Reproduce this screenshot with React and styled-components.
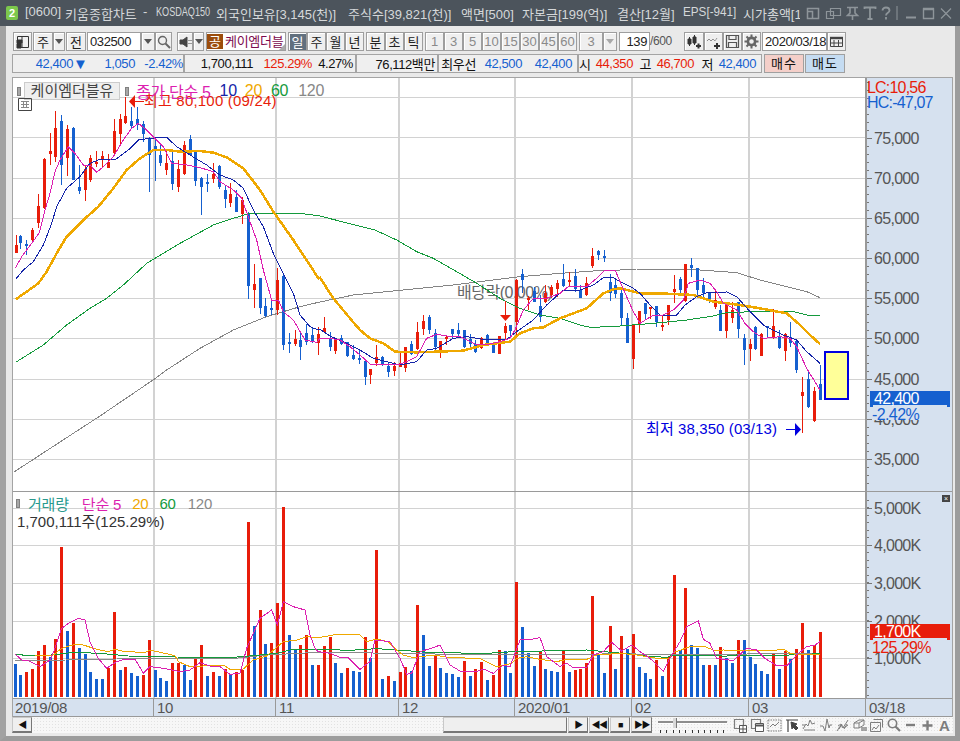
import React from "react";
import styled, { createGlobalStyle } from "styled-components";

const RED = "#e81d0a";
const BLUE = "#1560cf";
const AXIS_BG = "#d6e1ef";
const FONT = `"Liberation Sans", "Noto Sans CJK KR", sans-serif`;

// chart data was read off in blocks, each block has its own origin (1/3 px units)
const toPage = (ox, oy, rows) => rows.map(([x, ...ys]) => [ox + x / 3, ...ys.map(y => (typeof y === "number" ? oy + y / 3 : y))]);
const line = (...blocks) => blocks.flatMap(([ox, oy, pts]) => toPage(ox, oy, pts)).map(p => p.join(",")).join(" ");

const candles = [
  ...toPage(0, 100, [
    [47, "r", 405, 435, 458, 458], [61, "b", 405, 408, 430, 446], [79, "b", 420, 432, 437, 465], [97, "r", 385, 390, 420, 425],
    [115, "r", 282, 318, 370, 385], [133, "r", 175, 177, 325, 328], [151, "r", 98, 153, 161, 195], [166, "r", 32, 84, 172, 186],
    [184, "b", 45, 63, 195, 255], [202, "r", 75, 87, 173, 228], [220, "b", 80, 84, 240, 240], [238, "b", 195, 261, 273, 282],
    [256, "r", 195, 207, 269, 303], [271, "r", 165, 174, 240, 245], [289, "r", 153, 186, 189, 200], [307, "r", 153, 168, 178, 200],
    [325, "r", 162, 186, 203, 205], [343, "r", 57, 93, 159, 163], [361, "r", 42, 57, 102, 135], [376, "r", -10, 48, 69, 72],
    [394, "b", 22, 63, 78, 85], [412, "b", 20, 57, 75, 90], [430, "b", 63, 73, 102, 125], [448, "b", 112, 114, 164, 275],
    [466, "b", 115, 139, 147, 243], [481, "b", 135, 165, 188, 197], [499, "r", 150, 189, 210, 225], [517, "b", 148, 183, 252, 270],
    [535, "r", 180, 207, 261, 275], [553, "r", 122, 135, 222, 225], [571, "b", 105, 117, 165, 165], [586, "b", 152, 156, 243, 258],
    [604, "b", 230, 234, 261, 345], [622, "b", 222, 246, 250, 276], [640, "r", 188, 222, 236, 250], [658, "b", 195, 198, 261, 268],
    [676, "b", 255, 270, 297, 325], [691, "r", 248, 282, 309, 320], [709, "b", 270, 290, 336, 336], [727, "r", 290, 300, 343, 372],
    [745, "b", 336, 340, 558, 597], [763, "r", 492, 552, 570, 625], [781, "b", 533, 534, 624, 642], [796, "b", 595, 618, 648, 652],
    [814, "b", 600, 624, 630, 645], [832, "r", 505, 540, 630, 645], [850, "b", 525, 528, 735, 750], [868, "b", 700, 726, 732, 760],
    [886, "r", 690, 717, 732, 738], [901, "b", 700, 720, 741, 780], [919, "b", 672, 698, 726, 735], [937, "b", 680, 705, 723, 728],
    [955, "r", 680, 702, 728, 765],
  ]),
  ...toPage(320, 230, [
    [13, "r", 262, 294, 305, 310], [31, "b", 305, 324, 350, 362], [46, "r", 325, 329, 362, 372], [64, "b", 315, 325, 342, 345],
    [82, "b", 335, 335, 378, 380], [100, "b", 345, 375, 387, 390], [118, "b", 358, 384, 388, 403], [136, "b", 390, 393, 440, 465],
    [151, "r", 418, 418, 435, 462], [169, "r", 345, 381, 398, 408], [187, "b", 378, 380, 405, 408], [205, "b", 395, 408, 426, 440],
    [223, "r", 395, 408, 423, 438], [241, "r", 370, 400, 410, 412], [256, "r", 350, 352, 413, 425], [274, "b", 332, 343, 372, 375],
    [292, "r", 277, 306, 357, 360], [310, "r", 255, 273, 296, 315], [328, "b", 255, 262, 300, 312], [346, "b", 297, 309, 351, 360],
    [361, "r", 333, 333, 363, 385], [379, "r", 318, 320, 323, 345], [397, "b", 297, 297, 312, 325], [415, "b", 280, 300, 312, 320],
    [433, "b", 300, 300, 350, 355], [451, "b", 312, 327, 343, 350], [466, "b", 330, 342, 367, 370], [484, "r", 320, 323, 354, 358],
    [502, "b", 312, 315, 342, 345], [520, "b", 338, 339, 369, 369], [538, "r", 318, 318, 372, 372], [556, "r", 278, 288, 309, 330],
    [571, "b", 285, 285, 303, 325], [589, "r", 148, 150, 276, 320], [607, "b", 117, 132, 150, 190], [625, "r", 198, 205, 210, 240],
    [643, "b", 170, 183, 215, 215], [661, "b", 195, 228, 262, 275], [676, "r", 165, 190, 215, 220], [694, "r", 165, 170, 195, 205],
    [712, "r", 150, 160, 177, 200], [730, "b", 102, 147, 168, 170], [748, "r", 126, 150, 156, 170], [766, "b", 118, 138, 177, 185],
    [781, "b", 165, 180, 205, 205], [799, "r", 142, 158, 195, 198], [817, "r", 55, 79, 108, 115], [835, "b", 60, 63, 75, 90],
    [853, "b", 60, 78, 84, 95], [871, "b", 132, 156, 190, 212], [886, "b", 150, 165, 192, 205], [904, "b", 175, 189, 265, 285],
    [922, "b", 250, 264, 339, 339], [940, "r", 285, 285, 387, 417],
  ]),
  ...toPage(620, 240, [
    [58, "r", 214, 214, 252, 278], [76, "b", 190, 190, 222, 236], [91, "r", 200, 202, 208, 238], [109, "b", 198, 198, 246, 260],
    [127, "r", 225, 255, 262, 272], [145, "r", 195, 195, 240, 255], [163, "r", 105, 148, 156, 190], [181, "b", 112, 117, 150, 160],
    [196, "r", 72, 72, 182, 185], [214, "b", 55, 76, 84, 110], [232, "b", 85, 85, 150, 165], [250, "b", 115, 135, 160, 178],
    [268, "b", 155, 160, 178, 188], [286, "r", 153, 180, 200, 208], [301, "b", 195, 210, 272, 272], [319, "r", 195, 195, 272, 293],
    [337, "r", 185, 210, 235, 248], [355, "b", 185, 187, 268, 293], [373, "b", 282, 295, 330, 375], [391, "r", 297, 312, 327, 362],
    [406, "b", 258, 260, 327, 330], [424, "r", 280, 282, 348, 348], [442, "b", 258, 258, 264, 295], [460, "r", 208, 258, 291, 296],
    [478, "b", 270, 290, 325, 328], [496, "r", 280, 282, 333, 362], [511, "b", 245, 290, 308, 320], [529, "b", 303, 303, 390, 398],
    [547, "r", 410, 456, 468, 578], [565, "b", 393, 417, 501, 504], [583, "r", 440, 453, 543, 546], [601, "b", 375, 433, 480, 480],
  ]),
];

const priceLines = [
  { color: "#858585", w: 1, pts: "14,472 60,442 100,416 153,380 " + line(
    [0, 100, [[500, 810], [600, 745], [700, 690], [800, 650], [900, 620], [955, 607]]],
    [320, 230, [[100, 195], [250, 180], [400, 165], [480, 155], [600, 140], [720, 130], [860, 120], [900, 120]]],
    [620, 240, [[50, 87], [200, 87], [350, 98], [420, 120], [500, 140], [560, 155], [600, 173]]]) },
  { color: "#149a3c", w: 1, pts: line(
    [0, 100, [[47, 787], [130, 735], [200, 675], [270, 625], [320, 595], [370, 555], [440, 490], [540, 430], [640, 375], [700, 355], [750, 340], [900, 340], [955, 347]]],
    [320, 230, [[165, 0], [230, 30], [290, 65], [340, 85], [410, 125], [470, 160], [540, 205], [600, 235], [660, 255], [720, 265], [780, 285], [810, 292], [870, 290]]],
    [620, 240, [[0, 258], [100, 250], [200, 240], [280, 228], [320, 218], [400, 215], [520, 215], [560, 225], [600, 226]]]) },
  { color: "#efa800", w: 2.5, pts: line(
    [0, 100, [[47, 598], [80, 575], [115, 550], [140, 515], [170, 460], [200, 410], [250, 360], [295, 320], [340, 265], [380, 210], [420, 175], [460, 150], [500, 150], [540, 155], [600, 153], [640, 158], [680, 172], [730, 205], [780, 270], [820, 335], [880, 420], [920, 480], [955, 535]]],
    [320, 230, [[0, 143], [40, 205], [90, 265], [120, 300], [150, 325], [190, 340], [225, 365], [290, 367], [350, 365], [430, 362], [490, 345], [570, 335], [600, 310], [640, 295], [670, 292], [720, 265], [800, 235], [850, 190], [880, 178]]],
    [620, 240, [[0, 145], [60, 160], [120, 160], [220, 165], [280, 185], [360, 195], [420, 205], [500, 220], [540, 255], [570, 285], [600, 312]]]) },
  { color: "#1424a8", w: 1, pts: line(
    [0, 100, [[47, 538], [70, 510], [100, 485], [130, 435], [155, 370], [170, 320], [200, 265], [240, 230], [270, 190], [300, 178], [345, 180], [385, 150], [415, 120], [450, 115], [500, 112], [530, 140], [570, 165], [620, 195], [660, 225], [700, 240], [730, 265], [760, 330], [790, 380], [820, 460], [850, 520], [880, 580], [900, 645], [930, 680], [955, 690]]],
    [320, 230, [[0, 298], [30, 318], [80, 340], [120, 360], [160, 385], [200, 395], [240, 405], [290, 395], [320, 360], [350, 355], [400, 325], [440, 320], [500, 330], [560, 328], [590, 305], [640, 270], [680, 225], [730, 180], [780, 180], [820, 165], [850, 143], [880, 143]]],
    [620, 240, [[0, 125], [40, 145], [60, 160], [90, 195], [120, 225], [170, 225], [195, 195], [230, 170], [260, 158], [320, 156], [350, 170], [390, 215], [430, 255], [490, 285], [530, 300], [560, 335], [600, 370]]]) },
  { color: "#dc1fb0", w: 1, pts: line(
    [0, 100, [[47, 503], [65, 470], [95, 430], [118, 398], [135, 330], [150, 280], [165, 215], [180, 180], [205, 140], [225, 160], [250, 195], [270, 195], [290, 217], [310, 200], [340, 170], [370, 120], [395, 85], [415, 70], [440, 90], [470, 120], [490, 140], [515, 190], [560, 195], [600, 203], [640, 215], [660, 245], [700, 270], [725, 295], [750, 365], [770, 420], [790, 510], [815, 600], [835, 600], [850, 635], [880, 660], [915, 720], [950, 727]]],
    [320, 230, [[0, 325], [30, 325], [60, 330], [90, 350], [120, 375], [150, 402], [200, 405], [240, 402], [260, 395], [290, 380], [320, 325], [350, 313], [380, 318], [420, 320], [470, 345], [510, 342], [540, 335], [570, 325], [585, 300], [610, 240], [640, 205], [680, 205], [720, 190], [745, 170], [800, 170], [830, 145], [855, 120], [885, 120], [920, 200], [940, 245]]],
    [620, 240, [[60, 250], [100, 225], [130, 225], [160, 210], [190, 180], [205, 130], [240, 120], [270, 130], [290, 155], [310, 190], [350, 210], [375, 250], [400, 275], [430, 295], [480, 290], [510, 295], [530, 320], [560, 385], [600, 450]]]) },
];

const volBars = [
  ...toPage(0, 485, [
    [46, "b", 537], [61, "b", 570], [79, "r", 561], [97, "r", 552], [115, "r", 498], [133, "r", 480], [151, "b", 515], [166, "r", 462], [184, "r", 186],
    [202, "b", 438], [220, "r", 414], [238, "b", 489], [256, "b", 507], [271, "b", 561], [289, "b", 582], [307, "b", 582], [325, "r", 549], [343, "r", 381],
    [361, "b", 555], [376, "r", 546], [394, "b", 564], [412, "b", 573], [430, "r", 570], [448, "r", 465], [466, "b", 555], [481, "b", 579], [499, "b", 588],
    [517, "r", 534], [535, "r", 534], [553, "b", 540], [571, "b", 585], [586, "r", 522], [604, "r", 480], [622, "b", 573], [640, "r", 561], [658, "b", 573],
    [676, "r", 552], [691, "b", 569], [709, "r", 561], [727, "r", 555], [745, "r", 111], [763, "b", 423], [781, "r", 375], [796, "b", 477], [814, "r", 474],
    [832, "r", 354], [850, "r", 66], [868, "b", 450], [886, "b", 495], [901, "r", 480], [919, "r", 450], [937, "b", 540], [955, "r", 540],
  ]),
  ...toPage(320, 485, [
    [13, "r", 483], [31, "r", 456], [46, "b", 534], [64, "b", 564], [82, "r", 549], [100, "b", 558], [118, "b", 561], [136, "r", 456], [151, "b", 519],
    [169, "r", 195], [187, "b", 582], [205, "r", 573], [223, "b", 588], [241, "r", 561], [256, "r", 546], [274, "b", 558], [292, "r", 360], [310, "b", 450],
    [328, "b", 543], [346, "r", 510], [361, "b", 549], [379, "b", 564], [397, "b", 567], [415, "b", 576], [433, "r", 528], [451, "b", 573], [466, "r", 552],
    [484, "r", 531], [502, "b", 585], [520, "r", 570], [538, "r", 495], [556, "b", 498], [571, "b", 564], [589, "r", 291], [607, "b", 426], [625, "b", 504],
    [643, "b", 543], [661, "r", 498], [676, "b", 552], [694, "b", 558], [712, "b", 561], [730, "r", 498], [748, "b", 561], [766, "r", 555], [781, "r", 552],
    [799, "r", 534], [817, "r", 333], [835, "b", 510], [853, "b", 564], [871, "r", 423], [886, "b", 552], [904, "r", 453], [922, "b", 492], [940, "r", 447], [958, "b", 546],
  ]),
  ...toPage(640, 485, [
    [16, "b", 564], [31, "b", 582], [49, "r", 525], [67, "b", 573], [85, "r", 516], [103, "r", 270], [121, "b", 495], [136, "r", 309], [154, "b", 480],
    [172, "b", 489], [190, "b", 540], [208, "r", 540], [226, "b", 540], [241, "r", 486], [259, "b", 519], [277, "b", 534], [295, "r", 465], [313, "b", 465],
    [331, "b", 516], [346, "b", 537], [364, "b", 558], [382, "b", 567], [400, "r", 504], [418, "b", 552], [436, "r", 498], [451, "b", 522], [469, "r", 492],
    [487, "r", 414], [505, "b", 495], [523, "r", 480], [541, "r", 441],
  ]),
];

const volLines = [
  { color: "#8a8a8a", w: 1, pts: line(
    [0, 485, [[46, 528], [350, 522], [705, 520], [800, 510], [955, 502]]],
    [320, 485, [[240, 505], [500, 510], [800, 508], [940, 505]]],
    [640, 485, [[0, 510], [540, 505]]]) },
  { color: "#149a3c", w: 1, pts: line(
    [0, 485, [[46, 509], [130, 513], [220, 502], [300, 505], [385, 513], [525, 516], [700, 517], [760, 512], [830, 505], [870, 495], [955, 493]]],
    [320, 485, [[90, 496], [170, 491], [260, 497], [340, 503], [500, 505], [580, 500], [800, 495], [940, 508]]],
    [640, 485, [[0, 512], [80, 517], [100, 510], [230, 510], [250, 514], [290, 510], [400, 512], [540, 506]]]) },
  { color: "#efa800", w: 1, pts: line(
    [0, 485, [[106, 510], [160, 510], [185, 490], [225, 478], [250, 480], [290, 493], [325, 500], [345, 493], [375, 500], [435, 502], [450, 495], [525, 512], [535, 530], [570, 545], [670, 540], [690, 553], [730, 552], [760, 525], [800, 513], [850, 470], [890, 465], [920, 455], [955, 458]]],
    [320, 485, [[40, 450], [118, 448], [140, 470], [170, 462], [205, 470], [230, 495], [250, 510], [280, 518], [340, 510], [390, 518], [480, 520], [530, 545], [575, 535], [590, 520], [620, 515], [660, 523], [710, 530], [740, 523], [800, 523], [830, 510], [900, 505], [950, 510]]],
    [640, 485, [[50, 520], [90, 520], [100, 503], [150, 485], [195, 485], [225, 497], [250, 495], [390, 498], [430, 492], [450, 505], [480, 510], [540, 508]]]) },
  { color: "#dc1fb0", w: 1, pts: line(
    [0, 485, [[46, 508], [65, 525], [85, 527], [120, 545], [150, 525], [165, 490], [185, 430], [210, 412], [235, 400], [255, 405], [270, 470], [295, 520], [320, 550], [350, 530], [375, 522], [405, 522], [430, 565], [450, 545], [490, 550], [540, 560], [570, 555], [600, 533], [630, 543], [660, 545], [690, 568], [720, 565], [740, 490], [780, 400], [815, 375], [832, 420], [850, 350], [880, 365], [915, 375], [930, 450], [945, 490], [955, 500]]],
    [320, 485, [[30, 505], [60, 517], [85, 518], [120, 553], [150, 530], [165, 465], [210, 470], [240, 520], [260, 568], [275, 565], [300, 500], [340, 488], [360, 480], [390, 540], [420, 558], [470, 560], [490, 552], [520, 565], [550, 540], [570, 545], [600, 465], [640, 462], [660, 458], [680, 515], [720, 545], [740, 535], [760, 548], [800, 548], [820, 510], [850, 500], [875, 472], [905, 498], [935, 480]]],
    [640, 485, [[0, 500], [30, 520], [70, 558], [90, 520], [120, 470], [140, 425], [175, 408], [190, 463], [210, 475], [230, 520], [280, 527], [320, 490], [350, 495], [375, 520], [410, 542], [440, 543], [470, 510], [500, 485], [525, 480], [540, 470]]]) },
];

const vGrid = [153.5, 275.5, 398.5, 514.5, 631.5, 748.5];
const priceGrid = [97.5, 137.5, 178.5, 218.5, 258.5, 298.5, 338.5, 379.5, 419.5, 459.5];
const volGrid = [508.5, 545.5, 583.5, 621.5, 658.5];
const priceLabels = [[75, 138], [70, 178], [65, 218], [60, 258], [55, 298], [50, 338], [45, 379], [40, 419], [35, 459]];
const volLabels = [[5, 508], [4, 545], [3, 583], [2, 621], [1, 658]];

const titleParts = [
  { w: 40, t: "[0600]" }, { w: 78, t: "키움종합차트" }, { w: 13, t: "-" }, { w: 60, t: "KOSDAQ150", sx: 0.7 },
  { w: 132, t: "외국인보유[3,145(천)]" }, { w: 113, t: "주식수[39,821(천)]" }, { w: 61, t: "액면[500]" },
  { w: 95, t: "자본금[199(억)]" }, { w: 66, t: "결산[12월]" }, { w: 60, t: "EPS[-941]", sx: 0.9 }, { w: 57, t: "시가총액[11" },
];

const dateCells = [
  { w: 140, t: "2019/08" }, { w: 122, t: "10" }, { w: 123, t: "11" }, { w: 116, t: "12" },
  { w: 117, t: "2020/01" }, { w: 117, t: "02" }, { w: 117, t: "03" }, { w: 87, t: "03/18" },
];

const GlobalStyle = createGlobalStyle`
  html, body { margin: 0; padding: 0; background: #e9e9e9; }
  body { font-family: ${FONT}; }
  * { box-sizing: border-box; }
`;

const Win = styled.div`
  width: 960px;
  height: 741px;
  display: flex;
  flex-direction: column;
  overflow: hidden;
`;

const TitleBar = styled.div`
  height: 26px;
  flex: none;
  background: #4c545c;
  display: flex;
  align-items: center;
  padding-left: 6px;
`;

const AppBadge = styled.div`
  width: 12px;
  height: 14px;
  border-radius: 2px;
  background: #7cc84c;
  color: #fff;
  font-size: 11px;
  font-weight: bold;
  text-align: center;
  line-height: 14px;
`;

const Title = styled.div`
  width: 775px;
  margin-left: 7px;
  display: flex;
  color: #d5d8da;
  font-size: 13px;
  white-space: nowrap;
  overflow: hidden;
`;

const TitlePart = styled.span`
  flex: none;
  width: ${p => p.$w}px;
  overflow: hidden;
  & > b {
    display: inline-block;
    font-weight: normal;
    transform-origin: left center;
    transform: scaleX(${p => p.$sx || 1});
  }
`;

const WinControls = styled.div`
  display: flex;
  align-items: center;
  margin-left: 5px;
  color: #8e959a;
`;

const Shell = styled.div`
  flex: 1;
  min-height: 0;
  border-left: 6px solid #a2a2a2;
  border-right: 5px solid #9c9c9c;
  border-bottom: 5px solid #9c9c9c;
  padding: 6px 2px 0 6px;
  background: #e9e9e9;
  display: flex;
  flex-direction: column;
`;

const Toolbar = styled.div`
  height: 19px;
  flex: none;
  margin-left: 1px;
  display: flex;
`;

const Gap = styled.div`
  flex: none;
  width: ${p => p.$w}px;
`;

const Btn = styled.div`
  flex: none;
  width: ${p => p.$w || 19}px;
  height: 19px;
  display: flex;
  align-items: center;
  justify-content: center;
  font-size: 13px;
  border: 1px solid #9e9e9e;
  box-shadow: inset 1px 1px #fff;
  background: ${p => (p.$active ? "#62707e" : "#efefef")};
  color: ${p => (p.$active ? "#fff" : p.$muted ? "#8a8a8a" : "#222")};
`;

const Field = styled.div`
  flex: none;
  width: ${p => p.$w}px;
  height: 19px;
  background: #fff;
  border: 1px solid #9e9e9e;
  display: flex;
  align-items: center;
  justify-content: ${p => (p.$right ? "flex-end" : "flex-start")};
  padding: 0 2px;
  font-size: 13px;
  letter-spacing: -0.4px;
  color: #222;
`;

const Arrow = styled.i`
  width: 0;
  height: 0;
  border-left: 4px solid transparent;
  border-right: 4px solid transparent;
  border-top: 5px solid ${p => (p.$muted ? "#a8a8a8" : "#555")};
`;

const StockName = styled.div`
  flex: none;
  width: 80px;
  height: 19px;
  display: flex;
  background: #fff;
  border: 1px solid #9e9e9e;
  position: relative;
  font-size: 13px;
  &::after {
    content: "";
    position: absolute;
    right: 0;
    bottom: 0;
    border-left: 6px solid transparent;
    border-bottom: 6px solid #aaa;
  }
`;

const StockTag = styled.span`
  width: 16px;
  margin: 1px 0;
  background: #9c4d0c;
  color: #fff;
  text-align: center;
  line-height: 15px;
`;

const StockLabel = styled.span`
  color: #7d0a4e;
  line-height: 17px;
  padding-left: 2px;
  letter-spacing: -0.3px;
  white-space: nowrap;
`;

const PageCount = styled.div`
  flex: none;
  width: 23px;
  font-size: 12px;
  line-height: 19px;
  color: #555;
  letter-spacing: -0.4px;
`;

const InfoBar = styled.div`
  height: 19px;
  flex: none;
  margin-top: 3px;
  display: flex;
  font-size: 13px;
  letter-spacing: -0.4px;
`;

const InfoSeg = styled.div`
  flex: none;
  width: ${p => p.$w}px;
  background: #efefef;
  border: 1px solid #a4a4a4;
  display: flex;
  align-items: center;
  white-space: nowrap;
`;

const Val = styled.span`
  flex: none;
  width: ${p => p.$w}px;
  text-align: right;
  font-size: ${p => p.$fs || 13}px;
  color: ${p => p.$c || "#111"};
`;

const TradeBtn = styled.div`
  flex: none;
  width: ${p => p.$w}px;
  margin-left: ${p => p.$ml}px;
  background: ${p => p.$bg};
  border: 1px solid #a0a0a0;
  text-align: center;
  line-height: 17px;
  letter-spacing: 1px;
  color: #111;
`;

const Panel = styled.div`
  flex: none;
  width: 941px;
  margin-top: 4px;
  border: 1px solid #a4a4a4;
  border-bottom: none;
  background: #fff;
  font-size: 16px;
`;

const PaneRow = styled.div`
  display: flex;
  height: ${p => p.$h}px;
  border-bottom: ${p => (p.$rule ? "1px solid #9a9a9a" : "none")};
`;

const Plot = styled.div`
  position: relative;
  flex: none;
  width: 852px;
  height: 100%;
  background: #fff;
`;

const ChartSvg = styled.svg`
  display: block;
  font-family: ${FONT};
`;

const Axis = styled.div`
  position: relative;
  flex: none;
  width: 87px;
  height: 100%;
  background: ${AXIS_BG};
  border-left: 2px solid #999;
`;

const Legend = styled.div`
  position: absolute;
  left: ${p => p.$x}px;
  top: ${p => p.$y}px;
  display: flex;
  align-items: center;
  font-size: ${p => p.$fs}px;
  letter-spacing: ${p => p.$ls}px;
  white-space: nowrap;
`;

const Handle = styled.i`
  width: 4px;
  height: 9px;
  background: #a8a8a8;
  border: 1px solid #808080;
`;

const LegendName = styled.span`
  margin: 0 5px 0 3px;
  width: 96px;
  height: 18px;
  background: #efefef;
  border: 1px solid #ccc;
  color: #444;
  font-size: 15px;
  line-height: 16px;
  text-align: center;
  letter-spacing: 0;
`;

const LegendItem = styled.span`
  color: ${p => p.$c};
  margin-left: ${p => p.$ml}px;
`;

const VolumeNote = styled.div`
  position: absolute;
  left: 4px;
  top: 18px;
  font-size: 15px;
  color: #333;
  white-space: nowrap;
`;

const GridIcon = styled.svg`
  position: absolute;
  left: 5px;
  top: 20px;
`;

const Ratio = styled.div`
  position: absolute;
  left: ${p => p.$x}px;
  top: ${p => p.$y}px;
  height: ${p => (p.$cover ? "13px" : "auto")};
  width: ${p => (p.$cover ? "76px" : "auto")};
  background: ${p => (p.$cover ? AXIS_BG : "transparent")};
  font-size: 16px;
  line-height: 15px;
  letter-spacing: ${p => p.$ls}px;
  color: ${p => p.$c};
  white-space: nowrap;
`;

const PriceTag = styled.div`
  position: absolute;
  left: 3px;
  top: ${p => p.$y}px;
  width: 80px;
  height: 14px;
  padding-left: 4px;
  background: ${p => p.$bg};
  color: #fff;
  font-size: 16px;
  line-height: 15px;
  letter-spacing: -0.7px;
  &::before, &::after {
    content: "";
    position: absolute;
    bottom: -2px;
    width: 3px;
    height: 2px;
    background: ${p => p.$bg};
  }
  &::before { left: 0; }
  &::after { right: 0; }
`;

const CloseBox = styled.div`
  position: absolute;
  right: 2px;
  top: 3px;
  width: 8px;
  height: 7px;
  background: #444;
  color: #fff;
  font-size: 7px;
  line-height: 7px;
  text-align: center;
`;

const DateRow = styled.div`
  display: flex;
  height: 19px;
  background: ${AXIS_BG};
  border-top: 1px solid #999;
  border-bottom: 1px solid #999;
`;

const DateCell = styled.div`
  flex: none;
  width: ${p => p.$w}px;
  padding-left: ${p => (p.$first ? 2 : 3)}px;
  border-left: ${p => (p.$first ? "none" : "1px solid #999")};
  font-size: 15px;
  line-height: 17px;
  letter-spacing: -0.3px;
  color: #555;
`;

const BottomBar = styled.div`
  flex: none;
  height: 16px;
  display: flex;
  align-items: flex-start;
  background-color: #f7f7f7;
  background-image: radial-gradient(#e2e2e2 0.5px, transparent 0.6px);
  background-size: 3px 3px;
`;

const NavBtn = styled.div`
  flex: none;
  width: ${p => p.$w || 19}px;
  height: 16px;
  margin-left: ${p => p.$ml || 0}px;
  background: #efefef;
  border: 1px solid #c8c8c8;
  border-right-color: #777;
  border-bottom: 2px solid #777;
  display: flex;
  align-items: center;
  justify-content: center;
  font-size: 9px;
  letter-spacing: -1.5px;
  color: #111;
`;

const Slider = styled.div`
  flex: none;
  position: relative;
  width: 72px;
  height: 16px;
  margin: 0 3px 0 5px;
`;

const SliderTrack = styled.div`
  position: absolute;
  left: 1px;
  right: 2px;
  top: 4px;
  height: 3px;
  background: #8d8d8d;
  border-bottom: 1px solid #fff;
`;

const SliderThumb = styled.div`
  position: absolute;
  left: 16px;
  top: 1px;
  width: 4px;
  height: 10px;
  background: #d8d8d8;
  border-right: 1px solid #777;
`;

const SliderTicks = styled.div`
  position: absolute;
  left: 3px;
  right: 3px;
  top: 13px;
  height: 3px;
  background: repeating-linear-gradient(to right, #333 0 1px, transparent 1px 6.3px);
`;

const ToolIcon = styled.div`
  flex: none;
  width: 17px;
  height: 16px;
  display: flex;
  align-items: center;
  justify-content: center;
  background: ${p => (p.$on ? "#fff" : "transparent")};
  color: #7d7d7d;
  font-size: 15px;
  font-weight: bold;
`;

const Ico = ({ w = 14, h = 14, children, ...rest }) => (
  <svg width={w} height={h} viewBox={`0 0 ${w} ${h}`} fill="none" stroke="currentColor" {...rest}>{children}</svg>
);

const TitleIcons = () => (
  <WinControls>
    <Ico w={19} h={14}><path d="M2.5 2.5h11v10h-11zM2.5 5.5h5v7" strokeWidth="1.5" /></Ico>
    <Ico w={19} h={14}><path d="M6.5 2.5h10v7h-10zM2.5 5.5h7v7h-7z" strokeWidth="1.2" /></Ico>
    <Ico w={19} h={14}><path d="M4 1.5h11M7 2v5L4.5 9.5h10L12 7V2M9.5 10v4" strokeWidth="1.6" /></Ico>
    <Ico w={17} h={14}><path d="M2.5 3V1.5h11V3M8 1.5V13M5.5 13h5" strokeWidth="1.8" /></Ico>
    <Ico w={14} h={14}><path d="M3.5 4.5C3.5 0.5 10.5 0.5 10.5 4.5 10.5 7 7 6.5 7 9.5M7 11v2.5" strokeWidth="1.8" /></Ico>
    <Ico w={8} h={16}><path d="M4 1v14" strokeWidth="1" /></Ico>
    <Ico w={18} h={14}><path d="M5 11.5h10" strokeWidth="2" /></Ico>
    <Ico w={19} h={14}><path d="M4.5 3h10v9.5h-10z" strokeWidth="1.4" /><path d="M4 3h11" strokeWidth="2.5" /></Ico>
    <Ico w={16} h={14}><path d="M3 2.5l10 10M13 2.5l-10 10" strokeWidth="1.2" /></Ico>
  </WinControls>
);

const MainToolbar = () => (
  <Toolbar>
    <Btn>
      <Ico w={14} h={14} style={{ color: "#333" }}>
        <path d="M1.5 1.5h11v11h-11z" /><path d="M1 5h5v3H1zM1 8.5h4V13H1z" fill="#333" /><path d="M6 1v12" />
      </Ico>
    </Btn>
    <Gap $w={1} />
    <Btn $w={20}>주</Btn>
    <Btn $w={12}><Arrow /></Btn>
    <Gap $w={1} />
    <Btn $w={20}>전</Btn>
    <Gap $w={1} />
    <Field $w={54}>032500</Field>
    <Btn $w={14}><Arrow /></Btn>
    <Btn $w={17}>
      <Ico w={14} h={14} style={{ color: "#666" }}><circle cx="5.5" cy="5.5" r="4" strokeWidth="1.4" /><path d="M8.5 8.5l4.5 4.5" strokeWidth="2" /></Ico>
    </Btn>
    <Gap $w={5} />
    <Btn $w={16}>
      <Ico w={13} h={12} style={{ color: "#444" }}><path d="M1 4h3l4-3v10L4 8H1z" fill="#444" /><path d="M10 4v1M10 7v1M12 4v1M12 7v1" /></Ico>
    </Btn>
    <Btn $w={11}><Arrow /></Btn>
    <Gap $w={2} />
    <StockName><StockTag>공</StockTag><StockLabel>케이엠더블</StockLabel></StockName>
    <Gap $w={2} />
    <Btn $active>일</Btn><Btn>주</Btn><Btn>월</Btn><Btn>년</Btn>
    <Gap $w={2} />
    <Btn>분</Btn><Btn>초</Btn><Btn>틱</Btn>
    <Gap $w={2} />
    {["1", "3", "5", "10", "15", "30", "45", "60"].map(t => <Btn key={t} $muted>{t}</Btn>)}
    <Gap $w={2} />
    <Btn $w={24} $muted>3</Btn>
    <Btn $w={14}><Arrow $muted /></Btn>
    <Gap $w={2} />
    <Field $w={31} $right>139</Field>
    <PageCount>/600</PageCount>
    <Gap $w={11} />
    <Btn $w={20}>
      <Ico w={15} h={14} style={{ color: "#333" }}>
        <path d="M1 4h3v5H1zM6 2h3v6H6zM2.5 2v9M7.5 0v10" fill="#333" /><path d="M9 11h5M11.5 8.5v5" strokeWidth="2" />
      </Ico>
    </Btn>
    <Btn>
      <Ico w={15} h={14} style={{ color: "#666" }}>
        <path d="M1 6l2-2 2 2 2-2 2 2 2-3" strokeDasharray="1 0.5" /><path d="M8 11h6M11 8v6" strokeWidth="2" stroke="#333" />
      </Ico>
    </Btn>
    <Btn>
      <Ico w={15} h={15} style={{ color: "#555" }}>
        <path d="M1.5 1.5h12v12h-12zM4 1.5v4h7v-4M3.5 13.5v-5h8v5" strokeWidth="1.2" />
      </Ico>
    </Btn>
    <Btn>
      <Ico w={15} h={15} style={{ color: "#666" }}>
        <circle cx="7.5" cy="7.5" r="3.6" strokeWidth="2.6" /><path d="M7.5 0.5v3M7.5 11.5v3M0.5 7.5h3M11.5 7.5h3M2.5 2.5l2 2M10.5 10.5l2 2M12.5 2.5l-2 2M4.5 10.5l-2 2" strokeWidth="2" />
      </Ico>
    </Btn>
    <Gap $w={1} />
    <Field $w={65}>2020/03/18</Field>
    <Btn>
      <Ico w={15} h={13} style={{ color: "#444" }}><path d="M1.5 2.5h12v9h-12z" /><path d="M1 3h13" strokeWidth="2.4" /><path d="M5 5v6M9.5 5v6M2 8h11" /></Ico>
    </Btn>
  </Toolbar>
);

const Info = () => (
  <InfoBar>
    <InfoSeg $w={172}>
      <Val $w={60} $c={BLUE}>42,400</Val>
      <Val $w={13} $c={BLUE} $fs={15}>▼</Val>
      <Val $w={49} $c={BLUE}>1,050</Val>
      <Val $w={48} $c={BLUE}>-2.42%</Val>
    </InfoSeg>
    <InfoSeg $w={172}>
      <Val $w={68}>1,700,111</Val>
      <Val $w={59} $c={RED}>125.29%</Val>
      <Val $w={41}>4.27%</Val>
    </InfoSeg>
    <InfoSeg $w={82}><Val $w={78}>76,112백만</Val></InfoSeg>
    <InfoSeg $w={140}>
      <Val $w={37}>최우선</Val>
      <Val $w={46} $c={BLUE}>42,500</Val>
      <Val $w={50} $c={BLUE}>42,400</Val>
    </InfoSeg>
    <InfoSeg $w={184}>
      <Val $w={11}>시</Val>
      <Val $w={43} $c={RED}>44,350</Val>
      <Val $w={18}>고</Val>
      <Val $w={43} $c={RED}>46,700</Val>
      <Val $w={19}>저</Val>
      <Val $w={43} $c={BLUE}>42,400</Val>
    </InfoSeg>
    <TradeBtn $w={40} $ml={2} $bg="#f4cfc9">매수</TradeBtn>
    <TradeBtn $w={40} $ml={1} $bg="#c5dcf2">매도</TradeBtn>
  </InfoBar>
);

const Grid = ({ rows, top, bottom }) => (
  <g stroke="#d2d2d2" shapeRendering="crispEdges">
    {rows.map(y => <line key={y} x1="13" x2="865" y1={y} y2={y} />)}
    {vGrid.map(x => <line key={x} x1={x} x2={x} y1={top} y2={bottom} strokeWidth="2" />)}
  </g>
);

const Polylines = ({ items }) => (
  <g fill="none" shapeRendering="crispEdges">
    {items.map(l => <polyline key={l.color} points={l.pts} stroke={l.color} strokeWidth={l.w} />)}
  </g>
);

const PricePlot = () => (
  <ChartSvg width="852" height="413" viewBox="13 78 852 413">
    <Grid rows={priceGrid} top={78} bottom={491} />
    <Polylines items={priceLines.slice(0, 1)} />
    <text x="457" y="298" fontSize="16" fill="#666" letterSpacing="-0.5">배당락(0.00%)</text>
    <g shapeRendering="crispEdges">
      {candles.map(([x, d, wt, bt, bb, wb]) => {
        const c = d === "r" ? RED : BLUE;
        const cx = Math.round(x);
        return (
          <g key={x} fill={c}>
            <rect x={cx} y={wt} width="1" height={wb - wt} />
            <rect x={cx - 1} y={bt} width="3" height={Math.max(bb - bt, 2)} />
          </g>
        );
      })}
    </g>
    <Polylines items={priceLines.slice(1)} />
    <rect x="825" y="352" width="23" height="47" fill="#ffff99" stroke="#0000e0" strokeWidth="2" />
    <rect x="505" y="301" width="1" height="15" fill={RED} />
    <path d="M500 315h11l-5.5 6z" fill={RED} />
    <path d="M135 95v13l-6-6.5z" fill={RED} />
    <rect x="135" y="101" width="9" height="1" fill={RED} />
    <text x="144" y="106" fontSize="15" fill={RED} letterSpacing="0.2">최고 80,100 (09/24)</text>
    <text x="646" y="434" fontSize="15" fill="#0000e0" letterSpacing="0.1">최저 38,350 (03/13)</text>
    <rect x="786" y="429" width="9" height="1" fill="#0000e0" />
    <path d="M795 423v13l6-6.5z" fill="#0000e0" />
  </ChartSvg>
);

const VolumePlot = () => (
  <ChartSvg width="852" height="206" viewBox="13 492 852 206">
    <Grid rows={volGrid} top={492} bottom={698} />
    <g shapeRendering="crispEdges">
      {volBars.map(([x, d, top]) => (
        <rect key={x} x={Math.round(x) - 1} y={top} width="3" height={697 - top} fill={d === "r" ? RED : BLUE} />
      ))}
    </g>
    <Polylines items={volLines} />
  </ChartSvg>
);

const AxisTicks = ({ y0, y1, step, major, label, vb, h }) => {
  const ticks = [];
  const n = Math.floor((y1 - y0) / step);
  for (let i = 0; i <= n; i++) ticks.push(y0 + i * step);
  return (
    <ChartSvg width="85" height={h} viewBox={vb}>
      <g stroke="#777" shapeRendering="crispEdges">
        {ticks.map(y => <line key={y} x1="867" x2="869" y1={y} y2={y} />)}
        {major.map(([, y]) => <line key={y} x1="867" x2="872" y1={y + 0.5} y2={y + 0.5} />)}
      </g>
      <g fill="#555" fontSize="16" letterSpacing="-0.7">
        {major.map(([v, y]) => <text key={y} x="874" y={y + 6}>{label(v)}</text>)}
      </g>
    </ChartSvg>
  );
};

const Bottom = () => (
  <BottomBar>
    <NavBtn $w={20}>◀</NavBtn>
    <Gap $w={411} />
    <NavBtn $w={124} />
    <NavBtn $w={20} $ml={1}>▶</NavBtn>
    <NavBtn $w={20} $ml={1}>◀◀</NavBtn>
    <NavBtn $w={20} $ml={1}>■</NavBtn>
    <NavBtn $w={21} $ml={1}>▶▶</NavBtn>
    <Slider><SliderTrack /><SliderThumb /><SliderTicks /></Slider>
    <ToolIcon>
      <Ico w={15} h={15}><path d="M1.5 1.5h9v9h-9z" strokeWidth="1.2" /><path d="M6.5 7.5h7v7h-7z" fill="#fff" stroke="#555" /><path d="M10 8v6M7 11h6" stroke="#555" /></Ico>
    </ToolIcon>
    <ToolIcon>
      <Ico w={15} h={15}><path d="M1.5 1.5h9v9h-9z" strokeWidth="1.2" /><path d="M5.5 5.5h8v8h-8z" fill="#fff" stroke="#555" /><path d="M5.5 7.5h8" stroke="#555" strokeWidth="2" /></Ico>
    </ToolIcon>
    <ToolIcon>
      <Ico w={15} h={15} strokeDasharray="1.5 1"><path d="M1 2h13M1 13h13M1 2v11M14 2v11" /><path d="M3 9l3-3 2 2 4-4" strokeDasharray="none" /></Ico>
    </ToolIcon>
    <ToolIcon $on>
      <Ico w={14} h={15} style={{ color: "#444" }}><path d="M1 2h12M3 2v12" strokeWidth="1.2" /><path d="M6 4l6 2-2 1 3 3-2 2-3-3-1 2z" fill="#444" /></Ico>
    </ToolIcon>
    <ToolIcon><Ico w={14} h={14}><path d="M0 7h3M1 11l3-5 2 2 2-6 2 4 3-1M2 12h11" /></Ico></ToolIcon>
    <ToolIcon><Ico w={14} h={14}><path d="M1 8h3l2 5 2-12 2 9 1-3h2" /></Ico></ToolIcon>
    <ToolIcon><Ico w={14} h={14}><path d="M1 13l4-6 2 3 5-8M3 11l3-5M8 11l3-5M2 8l3-2 3 4 4-3" /></Ico></ToolIcon>
    <ToolIcon><Ico w={15} h={14}><path d="M2 5l5-3h5v5l-5 3H2zM2 5h5v5M7 5l5-3" /><path d="M10 9v4M12 9v4M14 9v4" stroke="#555" /></Ico></ToolIcon>
    <ToolIcon><Ico w={15} h={15}><path d="M4.5 1.5h9v8M1.5 4.5h10v9h-10z" /><path d="M3 12l2-3 2 2 3-4" /></Ico></ToolIcon>
    <ToolIcon><Ico w={14} h={14}><circle cx="5.5" cy="5.5" r="4.2" strokeWidth="1.6" /><path d="M8.5 8.5l4.5 4.5" strokeWidth="2.2" /></Ico></ToolIcon>
    <ToolIcon><Ico w={11} h={8}><path d="M1 4h9" strokeWidth="2.4" /></Ico></ToolIcon>
    <ToolIcon><Ico w={11} h={11}><path d="M0.5 5.5h10M5.5 0.5v10" strokeWidth="2.4" /></Ico></ToolIcon>
    <ToolIcon>A</ToolIcon>
  </BottomBar>
);

const App = () => (
  <>
    <GlobalStyle />
    <Win>
      <TitleBar>
        <AppBadge>2</AppBadge>
        <Title>
          {titleParts.map(p => <TitlePart key={p.t} $w={p.w} $sx={p.sx}><b>{p.t}</b></TitlePart>)}
        </Title>
        <TitleIcons />
      </TitleBar>
      <Shell>
        <MainToolbar />
        <Info />
        <Panel>
          <PaneRow $h={414} $rule>
            <Plot>
              <PricePlot />
              <Legend $x={4} $y={1} $fs={16} $ls={-0.3}>
                <Handle />
                <LegendName>케이엠더블유</LegendName>
                <Handle />
                <LegendItem $c="#dc1fb0" $ml={7}>종가 단순 5</LegendItem>
                <LegendItem $c="#1424a8" $ml={9}>10</LegendItem>
                <LegendItem $c="#efa800" $ml={8}>20</LegendItem>
                <LegendItem $c="#149a3c" $ml={9}>60</LegendItem>
                <LegendItem $c="#888" $ml={10}>120</LegendItem>
              </Legend>
              <GridIcon width="14" height="13" viewBox="0 0 14 13" fill="none" stroke="#444">
                <path d="M0.5 0.5h13v12h-13z" />
                <path d="M3 3.5h8M3 6.5h8M3 9.5h8M5.5 3v7M8.5 3v7" stroke="#888" />
              </GridIcon>
            </Plot>
            <Axis>
              <AxisTicks y0={82} y1={491} step={8.03} major={priceLabels} label={v => `${v},000`} vb="867 78 85 413" h={413} />
              <Ratio $x={0} $y={2} $c={RED} $ls={-0.8}>LC:10,56</Ratio>
              <Ratio $x={0} $y={17} $c={BLUE} $ls={-0.8}>HC:-47,07</Ratio>
              <PriceTag $y={313} $bg={BLUE}>42,400</PriceTag>
              <Ratio $x={5} $y={329} $c={BLUE} $ls={-0.6} $cover>-2.42%</Ratio>
            </Axis>
          </PaneRow>
          <PaneRow $h={206}>
            <Plot>
              <VolumePlot />
              <Legend $x={3} $y={1} $fs={15} $ls={-0.2}>
                <Handle />
                <LegendItem $c="#2a9a8e" $ml={8}>거래량</LegendItem>
                <LegendItem $c="#dc1fb0" $ml={13}>단순 5</LegendItem>
                <LegendItem $c="#efa800" $ml={11}>20</LegendItem>
                <LegendItem $c="#149a3c" $ml={11}>60</LegendItem>
                <LegendItem $c="#888" $ml={12}>120</LegendItem>
              </Legend>
              <VolumeNote>1,700,111주(125.29%)</VolumeNote>
            </Plot>
            <Axis>
              <AxisTicks y0={500} y1={698} step={7.5} major={volLabels} label={v => `${v},000K`} vb="867 492 85 206" h={206} />
              <CloseBox>×</CloseBox>
              <PriceTag $y={132} $bg={RED}>1,700K</PriceTag>
              <Ratio $x={5} $y={148} $c={RED} $ls={-0.6}>125.29%</Ratio>
            </Axis>
          </PaneRow>
          <DateRow>
            {dateCells.map((d, i) => <DateCell key={d.t} $w={d.w} $first={i === 0}>{d.t}</DateCell>)}
          </DateRow>
        </Panel>
        <Bottom />
      </Shell>
    </Win>
  </>
);

export default App;
